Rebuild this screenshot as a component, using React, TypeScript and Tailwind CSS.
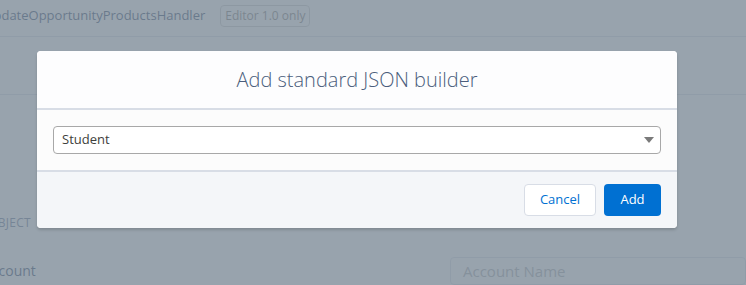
const Backdrop = () => (
  <div className="absolute inset-0 bg-[rgba(126,140,153,0.8)]" />
);

const PageBehind = () => {
  return (
    <div className="flex flex-col">
      <div className="flex h-[37px] items-center border-b border-[#d8dde6] pb-[4px]">
        <span className="-ml-[16px] text-[13px] text-[#16325c]">
          UpdateOpportunityProductsHandler
        </span>
        <span className="ml-[15px] rounded-[4px] border border-[#c9c9c9] px-[4px] py-[1px] text-[12px] leading-[18px] text-[#706e6b]">
          Editor 1.0 only
        </span>
      </div>
      <div className="h-[58px] border-b border-[#d8dde6]" />
      <div className="flex">
        <div className="flex w-[450px] flex-col">
          <span className="-ml-[12px] mt-[119px] text-[12px] uppercase tracking-wide text-[#54698d]">
            Object
          </span>
          <span className="-ml-[17px] mt-[28px] text-[14px] text-[#16325c]">
            Account
          </span>
        </div>
        <div className="mt-[162px] flex h-[28px] flex-1 items-center rounded-[4px] border border-[#d8dde6] px-[12px] text-[15px] text-[#9fa3a9]">
          Account Name
        </div>
      </div>
    </div>
  );
};

const Modal = () => {
  return (
    <div className="w-[640px] overflow-hidden rounded-[4px] bg-white shadow-[0_2px_3px_rgba(0,0,0,0.16)]">
      <div className="flex h-[59px] items-center justify-center border-b-2 border-[#d8dde6] bg-[#fdfdfe]">
        <h2 className="text-[20px] font-light text-[#4b5d7c]">
          Add standard JSON builder
        </h2>
      </div>
      <div className="bg-[#fcfcfc] px-[16px] py-[16px]">
        <div className="flex h-[28px] items-center justify-between rounded-[4px] border border-[#a8a8a8] bg-white pl-[8px] pr-[6px]">
          <span className="text-[13px] text-[#3e3e3c]">Student</span>
          <svg width="10" height="6" viewBox="0 0 10 6">
            <path d="M0 0h10L5 6z" fill="#7a7a7a" />
          </svg>
        </div>
      </div>
      <div className="flex h-[58px] items-center justify-end gap-[8px] border-t-2 border-[#d8dde6] bg-[#f4f6f9] px-[16px]">
        <button className="h-[32px] w-[72px] rounded-[4px] border border-[#d8dde6] bg-white text-[13px] text-[#0070d2]">
          Cancel
        </button>
        <button className="h-[32px] w-[57px] rounded-[4px] bg-[#0070d2] text-[13px] text-white">
          Add
        </button>
      </div>
    </div>
  );
};

const App = () => {
  return (
    <div className="relative h-[285px] w-[746px] overflow-hidden bg-white font-['Open_Sans',sans-serif]">
      <PageBehind />
      <Backdrop />
      <div className="absolute inset-0 pl-[37px] pt-[51px]">
        <Modal />
      </div>
    </div>
  );
};

export default App;
